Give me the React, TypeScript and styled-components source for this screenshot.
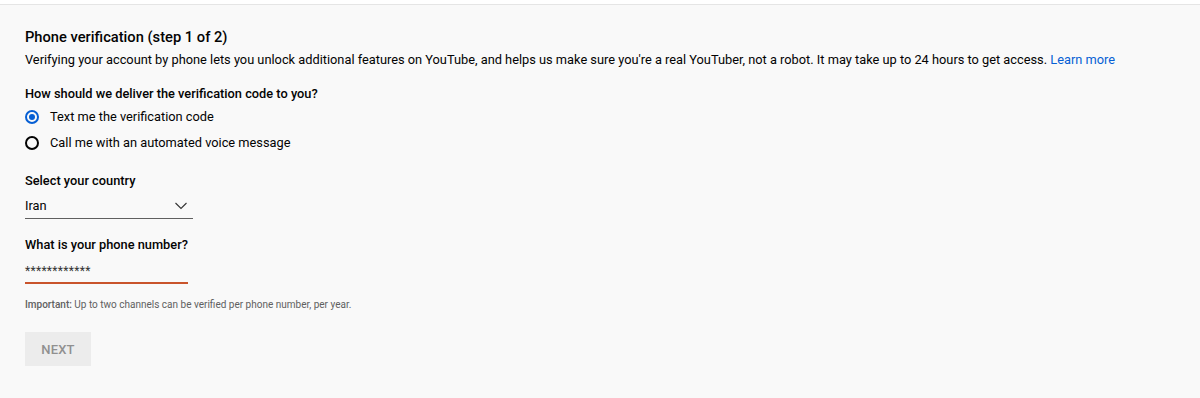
import React from "react";
import styled, { createGlobalStyle } from "styled-components";

const Global = createGlobalStyle`
  html, body { margin: 0; padding: 0; background: #fff; }
  body { font-family: Roboto, "Noto Sans", Arial, sans-serif; }
`;

const Page = styled.div`
  width: 1200px;
  height: 398px;
  box-sizing: border-box;
  padding-top: 4px;
  background: #fff;
`;

const Panel = styled.main`
  height: 394px;
  box-sizing: border-box;
  border-top: 1px solid #e5e5e5;
  background: #f9f9f9;
  padding: 22px 25px 0;
  display: flex;
  flex-direction: column;
  color: #030303;
`;

const Title = styled.h1`
  margin: 0;
  font-size: 14.7px;
  font-weight: 500;
  line-height: 20px;
`;

const Intro = styled.p`
  margin: 4px 0 0;
  font-size: 12.8px;
  line-height: 18px;
  color: #030303;
`;

const Link = styled.a`
  color: #065fd4;
  text-decoration: none;
`;

const Label = styled.div<{ $mt: number }>`
  margin-top: ${(p) => p.$mt}px;
  font-size: 12.8px;
  font-weight: 500;
  line-height: 18px;
`;

const RadioGroup = styled.div`
  display: flex;
  flex-direction: column;
  gap: 8px;
  margin-top: 5px;
`;

const RadioRow = styled.label`
  display: flex;
  align-items: center;
  gap: 11px;
  font-size: 12.8px;
  line-height: 18px;
`;

const RadioCircle = styled.span<{ $on?: boolean }>`
  width: 14px;
  height: 14px;
  box-sizing: border-box;
  border-radius: 50%;
  border: 2px solid ${(p) => (p.$on ? "#065fd4" : "#030303")};
  display: flex;
  align-items: center;
  justify-content: center;
  &::after {
    content: "";
    width: 6px;
    height: 6px;
    border-radius: 50%;
    background: ${(p) => (p.$on ? "#065fd4" : "transparent")};
  }
`;

const Select = styled.div`
  margin-top: 7px;
  width: 168px;
  display: flex;
  align-items: center;
  justify-content: space-between;
  border-bottom: 1px solid #606060;
  padding-bottom: 3px;
  font-size: 12.8px;
  line-height: 18px;
`;

const Chevron = styled.svg`
  margin-right: 5px;
`;

const PhoneInput = styled.div`
  margin-top: 9px;
  width: 163px;
  border-bottom: 2px solid #c9542c;
  padding-bottom: 3px;
  font-size: 12px;
  letter-spacing: 0.3px;
  line-height: 16px;
  color: #333;
`;

const Note = styled.p`
  margin: 15px 0 0;
  font-size: 10px;
  line-height: 12px;
  color: #606060;
  b { font-weight: 500; }
`;

const NextButton = styled.button`
  margin-top: 21px;
  width: 66px;
  height: 34px;
  border: none;
  background: #ececec;
  color: #909090;
  font-family: Roboto, Arial, sans-serif;
  font-size: 13px;
  font-weight: 500;
  letter-spacing: 0.2px;
  padding: 0;
`;

export default function App() {
  return (
    <>
      <Global />
      <Page>
        <Panel>
          <Title>Phone verification (step 1 of 2)</Title>
          <Intro>
            Verifying your account by phone lets you unlock additional features on YouTube, and helps us make sure you're a real YouTuber, not a robot. It may take up to 24 hours to get access.{" "}
            <Link href="#">Learn more</Link>
          </Intro>
          <Label $mt={16}>How should we deliver the verification code to you?</Label>
          <RadioGroup>
            <RadioRow>
              <RadioCircle $on />
              Text me the verification code
            </RadioRow>
            <RadioRow>
              <RadioCircle />
              Call me with an automated voice message
            </RadioRow>
          </RadioGroup>
          <Label $mt={20}>Select your country</Label>
          <Select>
            <span>Iran</span>
            <Chevron width="14" height="8" viewBox="0 0 14 8">
              <path d="M1.5 1l5.5 5.5 5.5-5.5" fill="none" stroke="#333" strokeWidth="1.1" />
            </Chevron>
          </Select>
          <Label $mt={17}>What is your phone number?</Label>
          <PhoneInput>************</PhoneInput>
          <Note>
            <b>Important:</b> Up to two channels can be verified per phone number, per year.
          </Note>
          <NextButton>NEXT</NextButton>
        </Panel>
      </Page>
    </>
  );
}
